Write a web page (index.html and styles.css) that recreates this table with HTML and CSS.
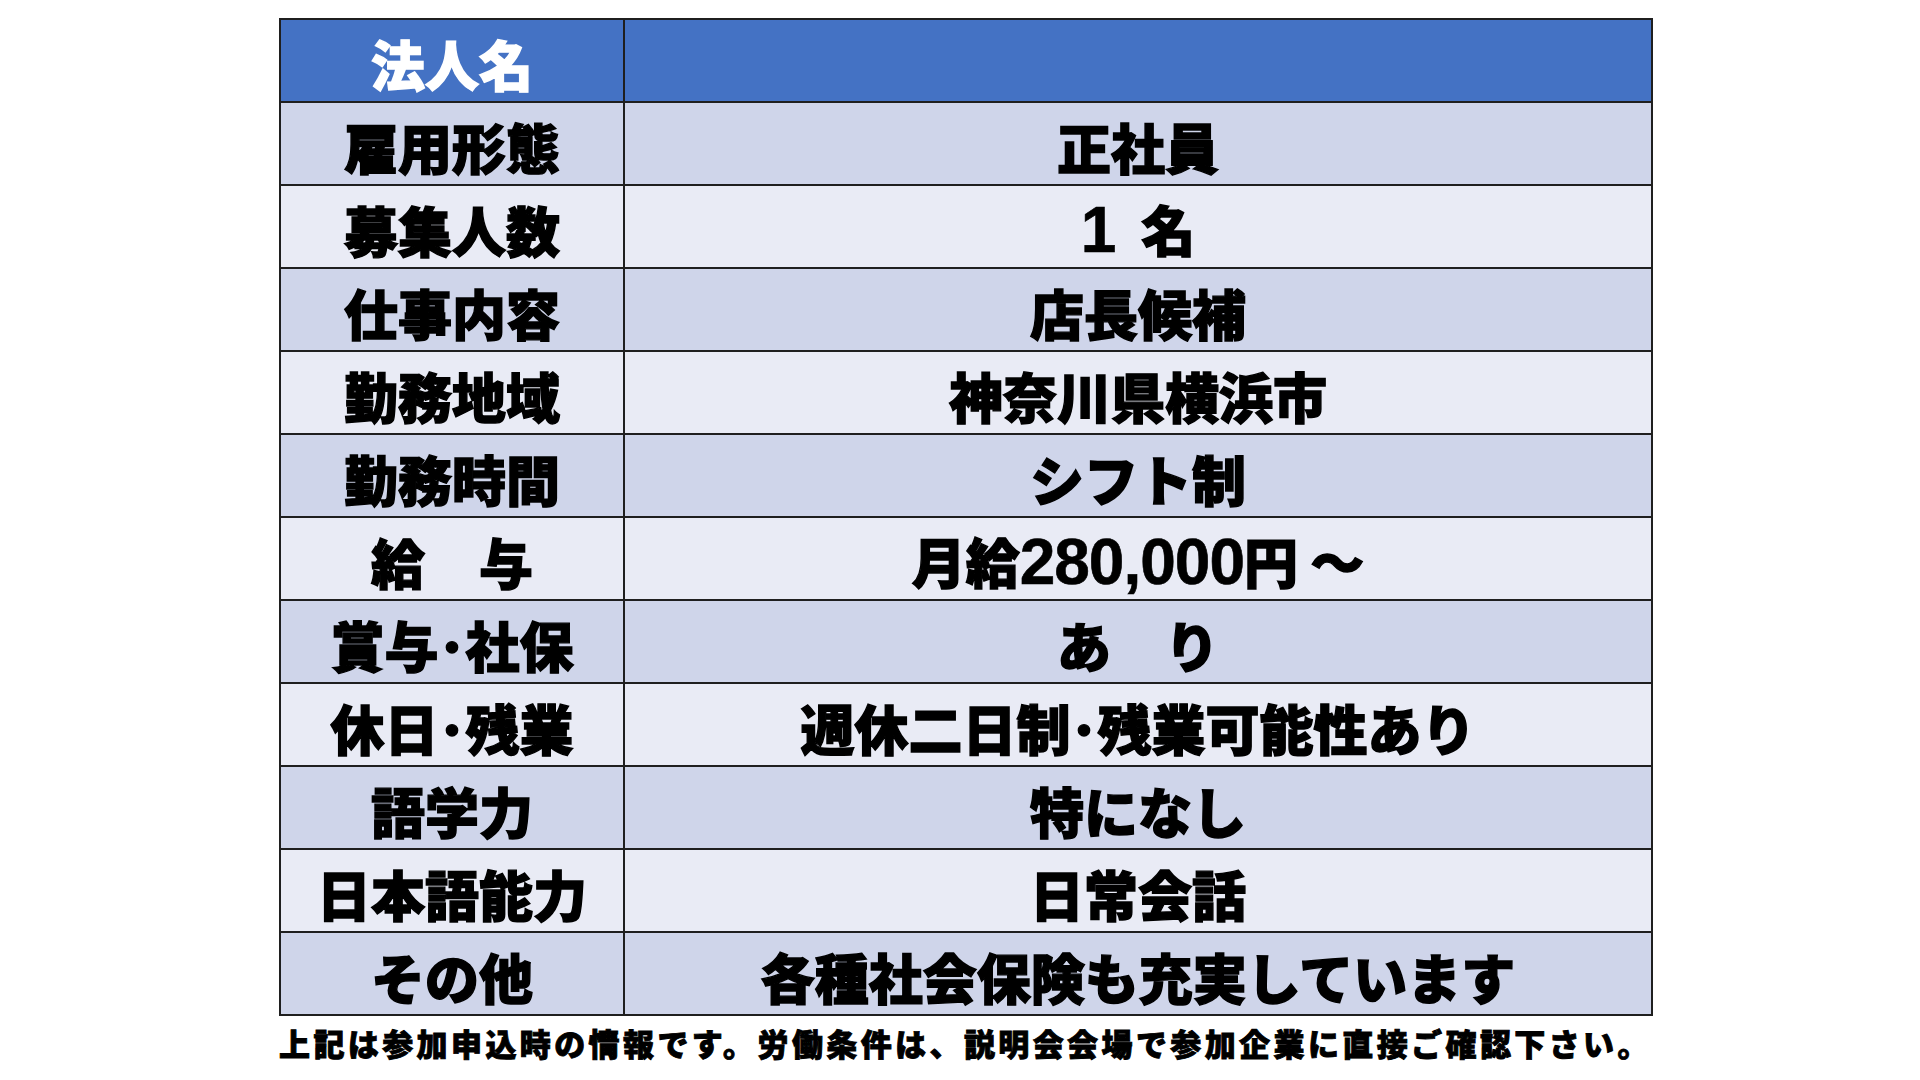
FILE: index.html
```html
<!DOCTYPE html>
<html lang="ja">
<head>
<meta charset="utf-8">
<title>求人票</title>
<link rel="stylesheet" href="styles.css">
</head>
<body>
<main class="page">
  <table class="job">
    <colgroup><col class="c-label"><col class="c-value"></colgroup>
    <tr class="head"><th>法人名</th><td></td></tr>
    <tr class="odd"><th>雇用形態</th><td>正社員</td></tr>
    <tr class="even"><th>募集人数</th><td><span class="num one">1</span>名</td></tr>
    <tr class="odd"><th>仕事内容</th><td>店長候補</td></tr>
    <tr class="even"><th>勤務地域</th><td>神奈川県横浜市</td></tr>
    <tr class="odd"><th>勤務時間</th><td>シフト制</td></tr>
    <tr class="even"><th>給　与</th><td>月給<span class="num">280,000</span>円 ～</td></tr>
    <tr class="odd"><th>賞与･社保</th><td>あ　り</td></tr>
    <tr class="even"><th>休日･残業</th><td>週休二日制･残業可能性あり</td></tr>
    <tr class="odd"><th>語学力</th><td>特になし</td></tr>
    <tr class="even"><th>日本語能力</th><td>日常会話</td></tr>
    <tr class="odd"><th>その他</th><td>各種社会保険も充実しています</td></tr>
  </table>
  <p class="note">上記は参加申込時の情報です。労働条件は、説明会会場で参加企業に直接ご確認下さい。</p>
</main>
</body>
</html>
```

FILE: styles.css
```css
html, body {
  margin: 0;
  padding: 0;
  background: #ffffff;
}

body {
  width: 1920px;
  height: 1080px;
  overflow: hidden;
  font-family: "Noto Sans CJK JP", "Noto Sans", sans-serif;
  color: #000000;
}

.page {
  padding: 18px 0 0 279px;
}

.job {
  width: 1374px;
  table-layout: fixed;
  border-collapse: collapse;
  border: 2px solid #1f1f1f;
}

.c-label { width: 344px; }

.job th,
.job td {
  height: 75px;
  padding: 6px 0 0 0;
  border: 2px solid #1f1f1f;
  text-align: center;
  vertical-align: middle;
  font-size: 54px;
  font-weight: 900;
  line-height: 1;
  white-space: nowrap;
  -webkit-text-stroke: 1.4px currentColor;
}

.head th,
.head td {
  background: #4472c4;
  color: #ffffff;
}

.odd th,
.odd td {
  background: #cfd5ea;
}

.even th,
.even td {
  background: #e9ebf5;
}

.num {
  font-family: "Liberation Sans", Arial, sans-serif;
  font-weight: 700;
  font-size: 64px;
  letter-spacing: -1px;
  -webkit-text-stroke: 0.6px currentColor;
}

.one {
  margin-right: 26px;
}

.note {
  margin: 8px 0 0 0;
  font-size: 31px;
  font-weight: 900;
  letter-spacing: 3.4px;
  line-height: 1.2;
  white-space: nowrap;
  -webkit-text-stroke: 0.9px currentColor;
}
```
